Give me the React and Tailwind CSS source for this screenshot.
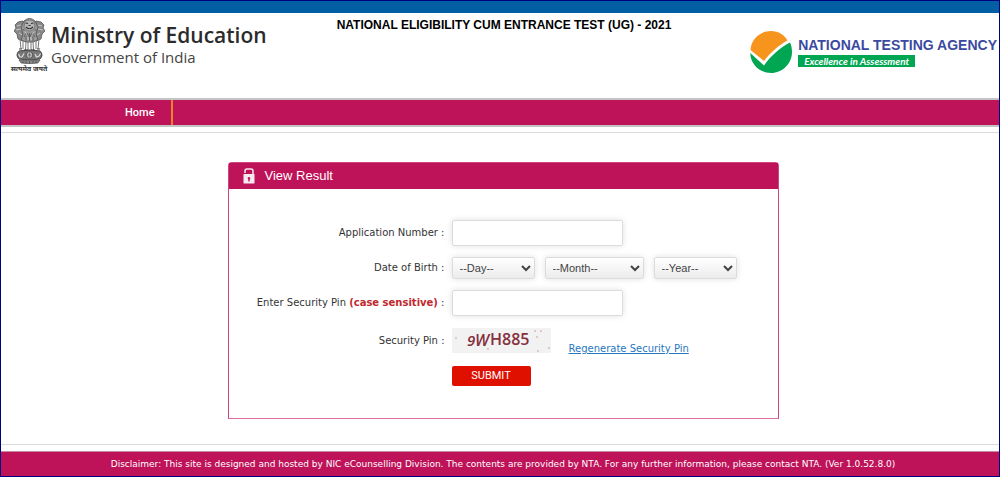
import React, { useState } from 'react';

const days = Array.from({ length: 31 }, (_, i) => i + 1);
const months = ['January', 'February', 'March', 'April', 'May', 'June', 'July', 'August', 'September', 'October', 'November', 'December'];
const years = Array.from({ length: 30 }, (_, i) => 2008 - i);

const inputClass = "w-[171px] h-[26px] px-2 bg-white border border-[#dcdcdc] rounded-xs shadow-[0_0_6px_rgba(0,0,0,0.12)] text-[11px] text-[#444] focus:outline-none";
const selectClass = "h-[22px] pl-[3px] border border-[#dcdcdc] rounded-xs bg-linear-to-b from-white to-[#ececec] shadow-[0_0_6px_rgba(0,0,0,0.12)] font-['Liberation_Sans',Arial,sans-serif] text-[11px] text-[#444]";
const labelClass = "text-right text-[#333]";

function Emblem() {
  return (
    <svg width="31" height="46" viewBox="0 0 31 46" fill="none" aria-hidden="true">
      {/* side lions */}
      <path d="M9 3 L4 4 L1 7 L2 10 L0 13 L3 16 L4 21 L9 23 L12 13 Z" fill="#888" stroke="#555" strokeWidth="0.8" />
      <path d="M22 3 L27 4 L30 7 L29 10 L31 13 L28 16 L27 21 L22 23 L19 13 Z" fill="#888" stroke="#555" strokeWidth="0.8" />
      <path d="M3 8 L7 7 M2 12 L7 11 M5 15 L8 17 M28 8 L24 7 M29 12 L24 11 M26 15 L23 17" stroke="#ccc" strokeWidth="0.9" />
      {/* front lion */}
      <path d="M10 3 Q15.5 -2 21 3 L24 9 L22 16 L24 22 L19 24 H12 L7 22 L9 16 L7 9 Z" fill="#999" stroke="#555" strokeWidth="0.9" />
      <path d="M11 3 Q15.5 1 20 3 L21 9 Q19 13 15.5 13 Q12 13 10 9 Z" fill="#b4b4b4" stroke="#666" strokeWidth="0.7" />
      <path d="M11.5 5 L14 5.5 M19.5 5 L17 5.5 M14.5 7.5 H16.5 M12 9 Q15.5 12.5 19 9" stroke="#333" strokeWidth="1.1" />
      <path d="M9 11 L12 15 L10 19 M22 11 L19 15 L21 19 M13 15 L15.5 19 L18 15 M15.5 15 V23 M12 18 V23 M19 18 V23" stroke="#555" strokeWidth="0.8" />
      <path d="M10.5 13 L12.5 16 M20.5 13 L18.5 16 M14 19 V22 M17 19 V22" stroke="#ddd" strokeWidth="0.8" />
      {/* legs */}
      <path d="M6 21 L7 31 M9 22 V31 M12 23 L11.5 32 M14 23 V32 M17 23 V32 M19 23 L19.5 32 M22 22 V31 M25 21 L24 31" stroke="#777" strokeWidth="1" />
      <path d="M5 31 H8 M10 32 H14 M17 32 H21 M23 31 H26" stroke="#444" strokeWidth="1.2" />
      {/* abacus with the wheel */}
      <path d="M5 33 Q15.5 31 26 33 Q30 37 26 41 Q15.5 43 5 41 Q1 37 5 33 Z" fill="#777" stroke="#444" strokeWidth="1" />
      <circle cx="15.5" cy="37" r="3.4" fill="#ddd" stroke="#444" strokeWidth="0.9" />
      <path d="M15.5 33.6 V40.4 M12 37 H19 M13 34.6 L18 39.4 M18 34.6 L13 39.4" stroke="#555" strokeWidth="0.6" />
      <path d="M4.5 36 L6 39 H8 L10 35.5 M21 36 L22.5 39 L25 38 L26.5 35.5" stroke="#ddd" strokeWidth="1.2" />
      <path d="M5 42 H26 L24 45 Q15.5 46.5 7 45 Z" fill="#888" stroke="#555" strokeWidth="0.7" />
      <path d="M9 43 V45 M12 43 V45 M15.5 43 V46 M19 43 V45 M22 43 V45" stroke="#444" strokeWidth="0.7" />
    </svg>
  );
}

function AgencyMark() {
  return (
    <svg width="42" height="42" viewBox="0 0 42 42" aria-hidden="true">
      <path d="M0.5 19 C1 8 10 0 21 0 C28.5 0 34.5 4 37.5 9.5 C29 14 20 22 14 30 Z" fill="#f7941e" />
      <path d="M0.3 22 L14 34.5 C20 26 29 17 40 11.5 C41.5 14.5 42 18 42 21 C42 32.6 32.6 42 21 42 C9.5 42 0.3 33 0.3 22 Z" fill="#00a651" />
    </svg>
  );
}

function Lock() {
  return (
    <svg width="12" height="16" viewBox="0 0 12 16" aria-hidden="true">
      <path d="M2 5 V3 Q2 1 4 1 H8 Q10 1 10 3 V8" fill="none" stroke="#f6e9ef" strokeWidth="1.5" />
      <rect x="0.5" y="6" width="11" height="9.5" rx="0.5" fill="#f6e9ef" />
      <path d="M6 9 a1.3 1.3 0 0 1 0.7 2.4 V13.5 H5.3 V11.4 A1.3 1.3 0 0 1 6 9 Z" fill="#be1259" />
    </svg>
  );
}

export default function App() {
  const [form, setForm] = useState({ appNo: '', day: '', month: '', year: '', pin: '' });

  const update = (e) => setForm({ ...form, [e.target.name]: e.target.value });

  return (
    <div className="border border-[#000080] bg-white font-['DejaVu_Sans',Verdana,sans-serif] text-[10px] leading-4">
      <div className="h-3 bg-[#035fa3]"></div>

      <header className="grid grid-cols-[1fr_auto_1fr] items-start h-[85px] pl-[10px] pr-[2px]">
        <div className="flex items-start gap-1 pt-[5px]">
          <div className="flex flex-col items-center w-9">
            <Emblem />
            <span className="font-['Noto_Sans_Devanagari','Noto_Sans',sans-serif] text-[7px] leading-3 font-bold text-[#333] whitespace-nowrap">सत्यमेव जयते</span>
          </div>
          <div className="pt-[5px] font-['Open_Sans','Noto_Sans',sans-serif] whitespace-nowrap">
            <h1 className="text-[21px] leading-6 font-semibold text-[#2b2b2b]">Ministry of Education</h1>
            <p className="text-[15px] leading-5 text-[#444]">Government of India</p>
          </div>
        </div>
        <h2 className="pt-1 font-['Liberation_Sans',Arial,sans-serif] text-[12px] font-bold text-black whitespace-nowrap">
          NATIONAL ELIGIBILITY CUM ENTRANCE TEST (UG) - 2021
        </h2>
        <div className="flex items-center justify-end gap-[6px] pt-[18px] whitespace-nowrap">
          <AgencyMark />
          <div className="flex flex-col items-start gap-[2px]">
            <span className="font-['Liberation_Sans',Arial,sans-serif] text-[14px] leading-4 font-bold text-[#3b4aa0]">NATIONAL TESTING AGENCY</span>
            <span className="px-[6px] bg-[#00a651] font-['Lato',sans-serif] text-[10px] leading-3 font-bold italic text-white">Excellence in Assessment</span>
          </div>
        </div>
      </header>

      <nav className="flex h-[29px] border-y-2 border-[#c4c4c4] bg-[#be1259]">
        <a href="#home" className="flex items-center ml-[107px] px-4 pl-[17px] border-r-2 border-[#e8832a] font-['Roboto',sans-serif] text-[11px] font-medium text-white">Home</a>
      </nav>

      <main className="mt-[5px] pt-[29px] pb-[25px] pl-[6px] border-y border-[#dcdcdc]">
        <section className="w-[551px] mx-auto h-[257px] border border-[#d0447f] border-b-[#dd6d9c] rounded-t-sm">
          <div className="flex items-center gap-[10px] h-[26px] px-[14px] bg-[#be1259]">
            <Lock />
            <h3 className="font-['Liberation_Sans',Arial,sans-serif] text-[13px] text-white">View Result</h3>
          </div>

          <form className="pt-[31px]" onSubmit={(e) => e.preventDefault()}>
            <div className="grid grid-cols-[216px_1fr] gap-x-[7px] gap-y-[11px] items-center">
              <label htmlFor="appNo" className={labelClass}>Application Number :</label>
              <div className="flex">
                <input id="appNo" name="appNo" type="text" className={inputClass} value={form.appNo} onChange={update} />
              </div>

              <label htmlFor="day" className={labelClass}>Date of Birth :</label>
              <div className="flex gap-[10px]">
                <select id="day" name="day" className={`${selectClass} w-[83px]`} value={form.day} onChange={update}>
                  <option value="">--Day--</option>
                  {days.map((d) => <option key={d} value={d}>{d}</option>)}
                </select>
                <select name="month" aria-label="Month" className={`${selectClass} w-[99px]`} value={form.month} onChange={update}>
                  <option value="">--Month--</option>
                  {months.map((m) => <option key={m} value={m}>{m}</option>)}
                </select>
                <select name="year" aria-label="Year" className={`${selectClass} w-[83px]`} value={form.year} onChange={update}>
                  <option value="">--Year--</option>
                  {years.map((y) => <option key={y} value={y}>{y}</option>)}
                </select>
              </div>

              <label htmlFor="pin" className={labelClass}>
                Enter Security Pin <b className="text-[#c1272d]">(case sensitive)</b> :
              </label>
              <div className="flex">
                <input id="pin" name="pin" type="text" className={inputClass} value={form.pin} onChange={update} />
              </div>

              <span className={`${labelClass} pt-[2px]`}>Security Pin :</span>
              <div className="flex items-end gap-[18px]">
                <svg width="99" height="26" viewBox="0 0 99 26" role="img" aria-label="Security pin">
                  <rect y="1" width="99" height="25" fill="#f3f2f2" />
                  <g fill="#d9b8bd">
                    <circle cx="4" cy="11" r="1" /><circle cx="36" cy="22" r="1" /><circle cx="83" cy="4" r="1" />
                    <circle cx="89" cy="4" r="1" /><circle cx="85" cy="10" r="1" /><circle cx="97" cy="21" r="1" />
                    <circle cx="86" cy="24" r="1" />
                  </g>
                  <g fill="#85303d" fontFamily="Open Sans, sans-serif" fontWeight="600">
                    <text x="15" y="19" fontSize="15" fontStyle="italic">9</text>
                    <text x="23" y="19" fontSize="16" fontStyle="italic">W</text>
                    <text x="38" y="18" fontSize="16">H885</text>
                  </g>
                </svg>
                <a href="#regenerate" className="-mb-1 text-[#2878c0] underline">Regenerate Security Pin</a>
              </div>

              <button type="submit" className="col-start-2 w-[79px] h-5 mt-[2px] rounded-xs bg-[#e01000] font-['Roboto',sans-serif] text-[11px] text-white cursor-pointer">
                SUBMIT
              </button>
            </div>
          </form>
        </section>
      </main>

      <footer className="mt-[6px] pl-[6px] py-1 border-t border-[#c58aa4] bg-[#be1259] text-center text-[9px] text-white">
        Disclaimer: This site is designed and hosted by NIC eCounselling Division. The contents are provided by NTA. For any further information, please contact NTA. (Ver 1.0.52.8.0)
      </footer>
    </div>
  );
}
